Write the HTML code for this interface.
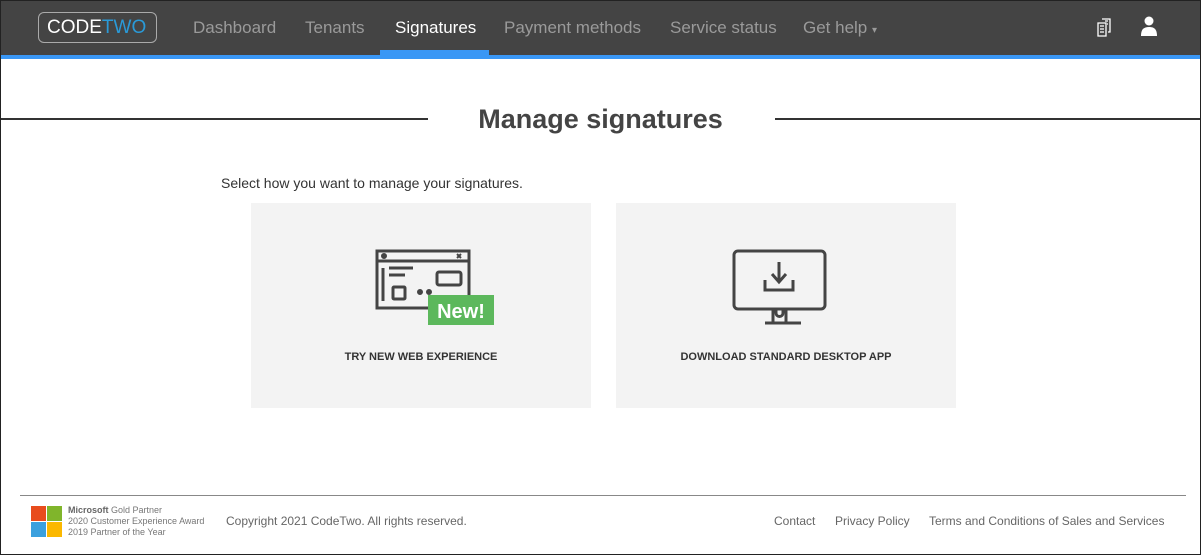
<!DOCTYPE html>
<html><head><meta charset="utf-8"><style>
*{box-sizing:border-box;margin:0;padding:0}
body{width:1201px;height:555px;overflow:hidden;font-family:"Liberation Sans",sans-serif;background:#fff;position:relative}
.frame{position:absolute;inset:0;border:1px solid #222;pointer-events:none;z-index:9}
.nav{position:absolute;left:0;top:0;width:1201px;height:55px;background:#444}
.blue{position:absolute;left:0;top:55px;width:1201px;height:4px;background:#3a97f5}
.logo{position:absolute;left:38px;top:12px;width:119px;height:31px;border:1px solid #aaa;border-radius:6px;color:#fff;font-size:19px;line-height:29px;padding-left:8px;letter-spacing:0}
.logo span{color:#2a9ad8}
.nl{position:absolute;top:18px;font-size:17px;color:#9a9a9a}
.act{position:absolute;left:380px;top:50px;width:109px;height:6px;background:#3a97f5}
h1{position:absolute;left:0;width:1201px;top:104px;text-align:center;font-size:27px;color:#444;font-weight:bold}
.hl{position:absolute;top:118px;height:2px;background:#333}
.card{position:absolute;top:203px;width:340px;height:205px;background:#f3f3f3}
.cap{position:absolute;top:351px;width:340px;text-align:center;font-size:11px;font-weight:bold;color:#333}
.foot{position:absolute;left:20px;top:495px;width:1166px;height:1px;background:#888}
.f{position:absolute;font-size:12px;color:#666}
.ms{position:absolute;font-size:9px;color:#777;line-height:11px;left:68px;top:505px}
</style></head><body>
<div class="nav"></div>
<div class="blue"></div>
<div class="logo">CODE<span>TWO</span></div>
<div class="nl" style="left:193px">Dashboard</div>
<div class="nl" style="left:305px">Tenants</div>
<div class="nl" style="left:395px;color:#fff">Signatures</div>
<div class="nl" style="left:504px">Payment methods</div>
<div class="nl" style="left:670px">Service status</div>
<div class="nl" style="left:803px">Get help <span style="font-size:10px">▾</span></div>
<div class="act"></div>
<svg style="position:absolute;left:1096px;top:17px" width="20" height="20" viewBox="0 0 20 20" fill="none" stroke="#fff" stroke-width="1.3"><path d="M6 2h8v13h-2M2 6h8v13H2zM4 9h4M4 12h4M4 15h4M9 4h3M11 7h1"/></svg>
<svg style="position:absolute;left:1140px;top:16px" width="18" height="21" viewBox="0 0 18 21" fill="#fff"><circle cx="9" cy="5" r="4.5"/><path d="M1 20c0-7 3-9 8-9s8 2 8 9z"/></svg>
<div class="hl" style="left:0;width:428px"></div>
<div class="hl" style="left:775px;width:426px"></div>
<h1>Manage signatures</h1>
<div style="position:absolute;left:221px;top:175px;font-size:14px;color:#333">Select how you want to manage your signatures.</div>
<div class="card" style="left:251px"></div>
<div class="card" style="left:616px"></div>
<svg style="position:absolute;left:375px;top:249px" width="122" height="78" viewBox="0 0 122 78" fill="none" stroke="#444" stroke-width="3">
<rect x="2" y="2" width="92" height="57"/><path d="M2 12h92"/><circle cx="9" cy="7" r="1.5" fill="#444"/><path d="M82 5l4 4M86 5l-4 4" stroke-width="2"/>
<path d="M8 19v33M14 19h24M14 26h16"/><rect x="18" y="38" width="12" height="12" rx="1"/><rect x="62" y="23" width="24" height="13" rx="2"/>
<circle cx="45" cy="43" r="1.5" fill="#444"/><circle cx="54" cy="43" r="1.5" fill="#444"/>
<rect x="53" y="46" width="66" height="30" fill="#5cb85c" stroke="none"/>
<text x="86" y="69" text-anchor="middle" font-family="Liberation Sans,sans-serif" font-weight="bold" font-size="20" fill="#fff" stroke="none">New!</text>
</svg>
<svg style="position:absolute;left:731px;top:248px" width="98" height="78" viewBox="0 0 98 78" fill="none" stroke="#444" stroke-width="3">
<rect x="3" y="3" width="91" height="58" rx="4"/><path d="M42 61v14M55 61v14M34 75h36M45 61v4a3.5 3.5 0 0 0 7 0v-4"/>
<path d="M48 14v20M41 26l7 8 7-8M34 32v10h28V32"/></svg>
<div class="cap" style="left:251px">TRY NEW WEB EXPERIENCE</div>
<div class="cap" style="left:616px">DOWNLOAD STANDARD DESKTOP APP</div>
<div class="foot"></div>
<div style="position:absolute;left:31px;top:506px;width:15px;height:15px;background:#e84c1d"></div>
<div style="position:absolute;left:47px;top:506px;width:15px;height:15px;background:#80b52b"></div>
<div style="position:absolute;left:31px;top:522px;width:15px;height:15px;background:#3ba0de"></div>
<div style="position:absolute;left:47px;top:522px;width:15px;height:15px;background:#fbb800"></div>
<div class="ms"><b style="color:#666">Microsoft</b> Gold Partner<br>2020 Customer Experience Award<br>2019 Partner of the Year</div>
<div class="f" style="left:226px;top:514px">Copyright 2021 CodeTwo. All rights reserved.</div>
<div class="f" style="left:774px;top:514px">Contact</div>
<div class="f" style="left:835px;top:514px">Privacy Policy</div>
<div class="f" style="left:929px;top:514px">Terms and Conditions of Sales and Services</div>
<div class="frame"></div>
</body></html>
